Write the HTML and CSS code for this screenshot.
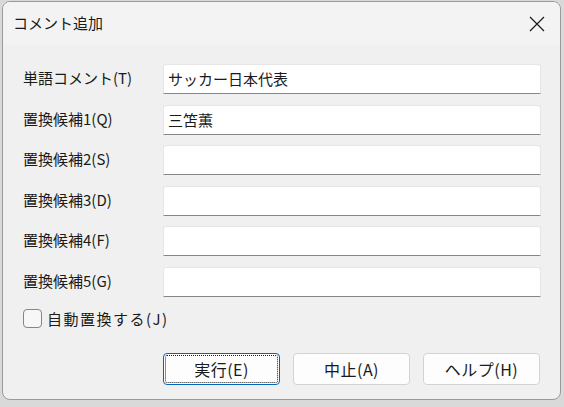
FILE: index.html
```html
<!DOCTYPE html>
<html lang="ja">
<head>
<meta charset="utf-8">
<link rel="stylesheet" href="styles.css">
</head>
<body>
<div class="window">
  <div class="titlebar">
    <span class="title">コメント追加</span>
    <svg class="close" width="16" height="16" viewBox="0 0 16 16"><path d="M1 1 L15 15 M15 1 L1 15" stroke="#1a1a1a" stroke-width="1.2" fill="none"/></svg>
  </div>
  <div class="content">
    <div class="form">
      <label class="lbl">単語コメント(T)</label><div class="field">サッカー日本代表</div>
      <label class="lbl">置換候補1(Q)</label><div class="field">三笘薫</div>
      <label class="lbl">置換候補2(S)</label><div class="field"></div>
      <label class="lbl">置換候補3(D)</label><div class="field"></div>
      <label class="lbl">置換候補4(F)</label><div class="field"></div>
      <label class="lbl">置換候補5(G)</label><div class="field"></div>
    </div>
    <div class="check"><span class="box"></span><span class="check-label">自動置換する(J)</span></div>
    <div class="buttons">
      <div class="btn default"><span>実行(E)</span></div>
      <div class="btn"><span>中止(A)</span></div>
      <div class="btn"><span>ヘルプ(H)</span></div>
    </div>
  </div>
</div>
</body>
</html>
```
FILE: styles.css
```css
* { box-sizing: border-box; }
html, body { margin: 0; height: 100%; }
body {
  width: 564px;
  height: 407px;
  background: #d9d9d9;
  padding: 1px 3px 7px 2px;
  font-family: "Noto Sans CJK JP", "Noto Sans", sans-serif;
  font-size: 15px;
  color: #1a1a1a;
  overflow: hidden;
}
.window {
  width: 559px;
  height: 399px;
  background: #f0f0f0;
  border: 1px solid #9a9a9a;
  border-radius: 8px;
  overflow: hidden;
  display: flex;
  flex-direction: column;
}
.titlebar {
  height: 43px;
  flex: none;
  background: #f3f3f3;
  display: flex;
  align-items: center;
  justify-content: space-between;
  padding: 0 15px 0 10px;
}
.title { font-size: 15px; line-height: 20px; margin-top: -1px; }
.content {
  padding: 19px 19px 0 20px;
  display: flex;
  flex-direction: column;
}
.form {
  display: grid;
  grid-template-columns: 140px 378px;
  grid-auto-rows: 30px;
  row-gap: 10.6px;
  align-items: center;
}
.lbl { line-height: 20px; margin-top: -2px; }
.field {
  height: 30px;
  background: #fff;
  border: 1px solid #e6e6e6;
  border-bottom: 1px solid #868686;
  border-radius: 3px 3px 0 0;
  padding: 0 4px;
  line-height: 27px;
}
.check {
  margin-top: 12px;
  display: flex;
  align-items: center;
  gap: 5px;
  height: 20px;
}
.check-label { letter-spacing: 1.5px; }
.box {
  width: 19px;
  height: 19px;
  border: 1px solid #858585;
  border-radius: 4px;
  background: #f7f7f7;
  flex: none;
}
.buttons {
  margin-top: 24px;
  display: flex;
  gap: 13px;
  padding-left: 140px;
}
.btn {
  width: 117px;
  height: 32px;
  background: #fdfdfd;
  border: 1px solid #d3d3d3;
  border-radius: 4px;
  display: flex;
  align-items: center;
  justify-content: center;
  line-height: 20px;
  font-size: 16px;
  letter-spacing: 0.5px;
}
.btn.default {
  border-color: #0067c0;
  outline: 1px dotted #222;
  outline-offset: -3px;
}
```
